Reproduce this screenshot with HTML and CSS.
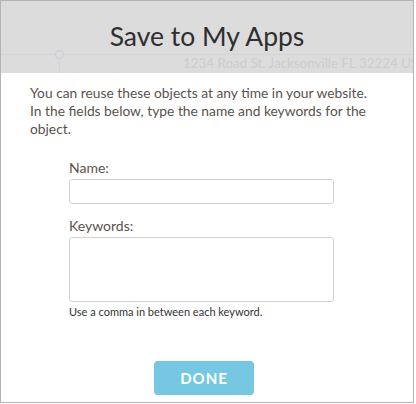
FILE: index.html
```html
<!DOCTYPE html>
<html lang="en">
<head>
    <meta charset="UTF-8">
    <title>Save to My Apps</title>
    <link rel="stylesheet" href="styles.css">
</head>
<body>
    <div class="dialog">
        <div class="dialog-head">
            <svg class="map" width="412" height="72" viewBox="0 0 412 72">
                <line x1="0" y1="53.5" x2="412" y2="53.5" stroke="#d2d3dd" stroke-width="1"/>
                <line x1="58.5" y1="58" x2="58.5" y2="72" stroke="#d2d3dd" stroke-width="1"/>
                <circle cx="58.5" cy="53.5" r="4" fill="#dcdcdc" stroke="#cfd0d8" stroke-width="1.5"/>
                <text x="182" y="67" fill="#cdcdcd" font-family="Lato, sans-serif" font-size="13.4">1234 Road St. Jacksonville FL 32224 US</text>
            </svg>
            <h1>Save to My Apps</h1>
        </div>
        <div class="dialog-body">
            <p class="intro">You can reuse these objects at any time in your website.<br>In the fields below, type the name and keywords for the object.</p>
            <form class="app-form">
                <label for="app-name">Name:</label>
                <input type="text" id="app-name" class="field">
                <label for="app-keys" class="second">Keywords:</label>
                <textarea id="app-keys" class="field area"></textarea>
                <p class="hint">Use a comma in between each keyword.</p>
            </form>
            <div class="actions">
                <button type="button" class="done">DONE</button>
            </div>
        </div>
    </div>
</body>
</html>
```

FILE: styles.css
```css
body{
    margin: 0;
    background: #fff;
    font-family: Lato, "Open Sans", sans-serif;
}
.dialog{
    width: 412px;
    height: 401px;
    border: 1px solid #b4b4b4;
    background: #fff;
    display: flex;
    flex-direction: column;
}
.dialog-head{
    position: relative;
    height: 72px;
    background: #dcdcdc;
    overflow: hidden;
}
.map{
    position: absolute;
    left: 0;
    top: 0;
}
.dialog-head h1{
    position: relative;
    margin: 0;
    padding-top: 20px;
    text-align: center;
    font-size: 26.5px;
    line-height: 30px;
    font-weight: 400;
    color: #2f2f2f;
}
.dialog-body{
    flex: 1;
    display: flex;
    flex-direction: column;
}
.intro{
    margin: 0;
    padding: 11px 28px 0 29px;
    font-size: 13.8px;
    line-height: 18px;
    color: #5a524c;
}
.app-form{
    display: flex;
    flex-direction: column;
    align-items: flex-start;
    padding: 22px 0 0 68px;
}
.app-form label{
    font-size: 14px;
    line-height: 16px;
    color: #5a524c;
    margin-bottom: 3px;
}
.app-form .second{
    margin-top: 14px;
    margin-bottom: 3px;
}
.field{
    box-sizing: border-box;
    width: 265px;
    height: 25px;
    margin: 0;
    border: 1px solid #d2d2d2;
    border-radius: 3px;
    background: #fff;
    font: inherit;
}
.area{
    height: 65px;
    resize: none;
    display: block;
}
.hint{
    margin: 3px 0 0;
    font-size: 11px;
    line-height: 14px;
    color: #333;
}
.actions{
    display: flex;
    justify-content: center;
    padding-top: 42px;
    padding-right: 6px;
}
.done{
    width: 100px;
    height: 34px;
    border: 0;
    border-radius: 4px;
    background: #76c8e2;
    color: #fff;
    font-family: Lato, sans-serif;
    font-size: 15px;
    font-weight: 700;
    letter-spacing: 1px;
}
```
